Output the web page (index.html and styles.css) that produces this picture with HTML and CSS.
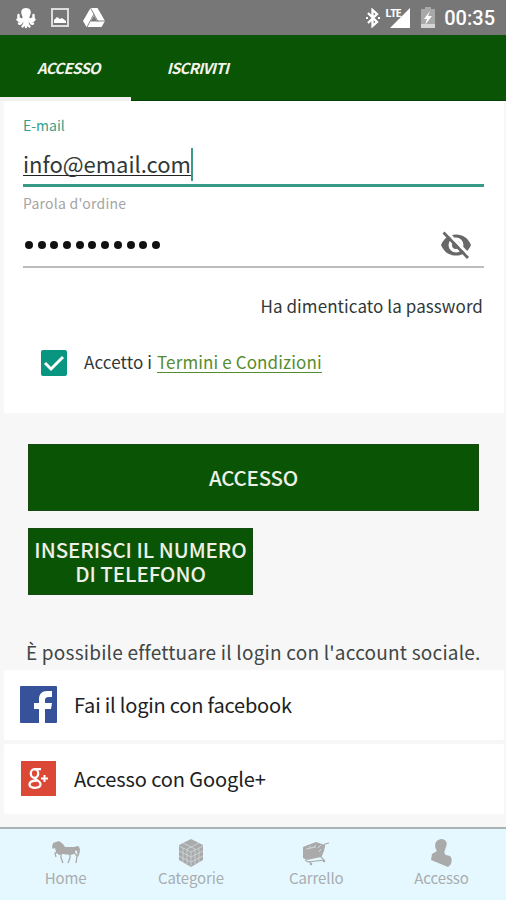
FILE: index.html
```html
<!DOCTYPE html>
<html lang="it">
<head>
<meta charset="utf-8">
<meta name="viewport" content="width=device-width">
<title>Accesso</title>
<link rel="stylesheet" href="styles.css">
</head>
<body>
<header class="status">
  <svg class="octopus" width="20" height="22" viewBox="0 0 20 22"><g fill="none" stroke="#fff" stroke-width="2.400" stroke-linecap="round"><path d="M8 11Q4 16 1.500 12.500M12 11q4 5 6.500 1.500M7 12Q5 18 3 16.500M13 12q2 6 4 4.500M8.500 13Q9 18 6.500 19.500M11.500 13q-.5 5 2 6.500M10 13v7M2.500 8v3l4 2M17.500 8v3l-4 2"/></g><path fill="#fff" d="M10 1C6 1 4.500 4 5.500 7l2 6h5l2-6c1-3-.5-6-4.500-6z"/></svg>
  <svg class="photo" width="18" height="19" viewBox="0 0 18 19"><path fill="none" stroke="#ddd" stroke-width="2" d="M1 1h16v17H1z"/><path fill="#fff" d="M3 15v-3l3-3 3 2 2-1 4 3v2z"/></svg>
  <svg class="drive" width="22" height="19" viewBox="0 0 22 19"><path fill="#fff" d="M7.500 0h7L22 13l-3.500 6h-15L0 13z"/><path fill="none" stroke="#777" stroke-width=".9" d="M7.500 0L15 13.500M11 6L4 19M7.500 13H22"/><path fill="#777" d="M11 7.500l3 5.500H8z"/></svg>
  <span class="grow"></span>
  <svg class="bt" width="14" height="20" viewBox="0 0 14 20"><path fill="none" stroke="#fff" stroke-width="2.300" d="M2 5l9 9-4.500 4V2L11 6l-9 9"/><path fill="#fff" d="M0 9h2v2H0zM12 9h2v2h-2z"/></svg>
  <span class="signal"><b class="lte">LTE</b><svg width="20" height="20" viewBox="0 0 20 20"><path fill="#fff" d="M20 0v20H0z"/></svg></span>
  <svg class="battery" width="14" height="21" viewBox="0 0 14 21"><path fill="#a8a8a8" d="M4 0h6v2h4v19H0V2h4z"/><path fill="#d5d5d5" d="M0 17h14v4H0z"/><path fill="#fff" d="M9 4L3 12h3l-2 6 7-9H7z"/></svg>
  <span class="clock">00:35</span>
</header>
<nav class="tabs">
  <a class="tab active"><span>ACCESSO</span></a>
  <a class="tab"><span>ISCRIVITI</span></a>
</nav>
<main>
  <section class="card form">
    <div class="label on"><span>E-mail</span></div>
    <div class="field email"><span class="value">info@email.com</span><i class="caret"></i></div>
    <div class="label pw"><span>Parola d'ordine</span></div>
    <div class="field password">
      <span class="dots"><i></i><i></i><i></i><i></i><i></i><i></i><i></i><i></i><i></i><i></i><i></i></span>
      <svg class="eye" width="32" height="28" viewBox="0 0 32 28"><path fill="#686868" fill-rule="evenodd" d="M1 14C4 7 9 3.500 16 3.500S28 7 31 14c-3 7-8 10.500-15 10.500S4 21 1 14zm15-7.500a7.500 7.500 0 1 0 0 15 7.500 7.500 0 0 0 0-15zm0 3.500a4 4 0 1 1 0 8 4 4 0 0 1 0-8z"/><path stroke="#fff" stroke-width="3" d="M6 0l24 25"/><path stroke="#686868" stroke-width="2.800" d="M3.500 1.500L28 27"/></svg>
    </div>
    <div class="forgot"><span>Ha dimenticato la password</span></div>
    <div class="accept">
      <svg width="26" height="26" viewBox="0 0 26 26"><rect width="26" height="26" rx="2" fill="#099681"/><path fill="none" stroke="#fff" stroke-width="3" d="M4 13l6 6L22 7"/></svg>
      <span class="terms">Accetto i <a>Termini e Condizioni</a></span>
    </div>
  </section>
  <button class="btn wide"><span>ACCESSO</span></button>
  <button class="btn phone"><span>INSERISCI IL NUMERO<br>DI TELEFONO</span></button>
  <p class="hint"><span>È possibile effettuare il login con l'account sociale.</span></p>
  <section class="card social">
    <svg width="37" height="37" viewBox="0 0 37 37"><rect width="37" height="37" rx="1" fill="#36529a"/><path fill="#fff" d="M19 37V23h-5v-6h5v-4c0-5 3-8 8-8h5v6h-3c-3 0-4 1-4 3v3h7l-1 6h-6v14z"/></svg>
    <span class="fb">Fai il login con facebook</span>
  </section>
  <section class="card social google">
    <svg width="37" height="37" viewBox="0 0 37 37"><rect x="1" y="1" width="35" height="35" fill="#dc4836"/><g fill="none" stroke="#fff" stroke-width="2.300"><ellipse cx="14.500" cy="13.500" rx="3.700" ry="4.300"/><path d="M14 9.200h7M15.500 17.500c-2 2 5 3 5 6.500 0 5-11 5-11 .5 0-3.500 4-4 8-4"/></g><path stroke="#fff" stroke-width="2" d="M21 18.500h7M24.500 15v7"/></svg>
    <span class="gp">Accesso con Google+</span>
  </section>
</main>
<footer class="bottom">
  <a><svg width="28" height="28" viewBox="0 0 28 28"><path fill="#aaa" d="M0 8l1-4 3-1 3-1 4 3 2 3h9l4-1c3 2 2 7 0 11l-1-1c1-3 0-5-1-6l-2 4-4 1-7-1-4 1-3-3-1-4-2 1z"/><path fill="none" stroke="#aaa" stroke-width="1.300" d="M8 13l-5 1 1 4M9 14v5l2 5M18 14v5l-2 5M22 13l3 4-1 7"/></svg><span>Home</span></a>
  <a><svg width="28" height="28" viewBox="0 0 28 28"><path fill="#aaa" d="M14 0l12 6v15l-12 7-12-7V6z"/><g fill="none" stroke="#cbd8dc" stroke-width=".8"><path d="M2 7l12 6 12-6M2 12l12 6 12-6M2 17l12 6 12-6M14 13v14M6 4l12 6v15M22 4L10 10v15M6 9v14M22 9v14"/></g></svg><span>Categorie</span></a>
  <a><svg width="28" height="28" viewBox="0 0 28 28"><path fill="#aaa" d="M1 8l5-2 8-3 9 3-1 6-3 6-14 3-4-2z"/><path fill="none" stroke="#aaa" stroke-width="1.100" d="M27 4l-4 1-4 13 3 3-16 2-3-2M7 22l2 3"/><path fill="none" stroke="#cfdde1" stroke-width=".9" d="M4 10l9-2M8 7v3M13 6v3M16 9l3-3M19 10l-2 3"/><circle cx="9" cy="25" r="1.300" fill="#aaa"/><circle cx="22" cy="22" r="1.300" fill="#aaa"/></svg><span>Carrello</span></a>
  <a><svg width="28" height="28" viewBox="0 0 28 28"><path fill="#aaa" d="M13 0c5 0 7 4 5 8l-1 3c-1 2-1 4 1 5l4 1c2 2 2 4 1 8l-3 3-17-7 1-6 5-3c-3-4-3-11 4-12z"/></svg><span>Accesso</span></a>
</footer>
</body>
</html>
```
FILE: styles.css
```css
* { box-sizing: border-box; }
body {
  margin: 0; width: 506px; height: 900px; overflow: hidden;
  display: flex; flex-direction: column;
  background: #f7f7f7; color: #303838;
  font-family: "Noto Sans CJK JP", "Open Sans", sans-serif;
}
svg { display: block; flex: none; }
span { white-space: nowrap; }
.grow { flex: 1; }
.status { height: 35px; flex: none; display: flex; align-items: center; padding: 0 11px 0 16px; background: #777; }
.photo { margin-left: 15px; }
.drive { margin-left: 14px; }
.signal { display: flex; margin-left: 5px; width: 25px; position: relative; justify-content: flex-end; }
.lte { position: absolute; left: 0; top: -2px; font: bold 11px/14px "Open Sans", sans-serif; color: #fff; letter-spacing: -1.2px; }
.battery { margin-left: 11px; }
.clock { margin-left: 9px; padding-top: 1px; font: 500 20px/35px Roboto, sans-serif; color: #fff; }
.tabs { height: 66px; flex: none; display: flex; background: #0a5505; border-bottom: 1px solid #0a3f07; }
.tab { width: 131px; height: 66px; padding-left: 2px; text-align: center; color: #f4f4ec; font: italic bold 15px/65px "Noto Sans CJK JP", sans-serif; letter-spacing: -0.7px; }
.tab.active { border-bottom: 4px solid #f0f0f0; padding-left: 6px; }
main { flex: 1; display: flex; flex-direction: column; }
.card { margin: 0 2px 0 4px; background: #fff; border-radius: 2px; }
.form { height: 312px; padding: 0 20px 0 19px; }
.label { height: 35px; padding-top: 13px; font-size: 14px; line-height: 22px; color: #a4a4a4; }
.label.on { color: #35a08c; }
.label.pw { height: 36px; padding-top: 5px; letter-spacing: .25px; }
.field { display: flex; border-bottom: 2px solid #bcbcbc; }
.email { height: 51px; border-bottom: 3px solid #379a87; align-items: flex-start; }
.value { font-size: 22px; line-height: 26px; border-bottom: 1px solid #222; height: 26px; margin-top: 14px; }
.caret { width: 2px; height: 33px; background: #3b9a88; margin-top: 12px; }
.password { height: 45px; justify-content: space-between; align-items: center; }
.dots { display: flex; gap: 4.700px; padding-left: 2px; }
.dots i { width: 8px; height: 8px; background: #111; border-radius: 50%; }
.eye { margin-right: 12px; }
.forgot { height: 80px; line-height: 76px; font-size: 17px; text-align: right; letter-spacing: .08px; padding-right: 1px; }
.accept { display: flex; align-items: center; padding-left: 18px; margin-top: -14px; height: 54px; font-size: 17px; }
.accept svg { margin-top: 3px; }
.terms { margin-left: 17px; letter-spacing: .12px; }
.terms a { color: #568c2c; border-bottom: 1px solid #568c2c; line-height: 20px; display: inline-block; margin-left: 1px; }
.btn { display: flex; align-items: center; justify-content: center; padding: 0 0 2px; margin-left: 28px; height: 67px; flex: none; border: 1px solid #174b12; background: #0a5505; color: #eef0e8; font: 500 20.500px/24px "Noto Sans CJK JP", sans-serif; }
.wide { width: 451px; margin-top: 31px; letter-spacing: -.2px; }
.phone { width: 225px; margin-top: 17px; letter-spacing: -.05px; }
.hint { height: 75px; margin: 0; padding: 44px 0 0 26px; font-size: 19px; line-height: 26px; color: #404646; letter-spacing: .21px; }
.social { height: 70px; flex: none; display: flex; align-items: center; padding: 0 0 2px 16px; font-size: 20px; color: #1b2121; }
.social span { margin-left: 17px; letter-spacing: -.1px; }
.social .fb { letter-spacing: -.2px; }
.google { margin-top: 4px; }
.bottom { height: 73px; flex: none; display: grid; grid-template-columns: repeat(4, 125.300px); padding-left: 3px; background: #e6f8ff; border-top: 2px solid #aab3b6; }
.bottom a { display: flex; flex-direction: column; align-items: center; padding-top: 10px; color: #a8adaf; font-size: 15px; line-height: 21px; letter-spacing: -.1px; }
```
